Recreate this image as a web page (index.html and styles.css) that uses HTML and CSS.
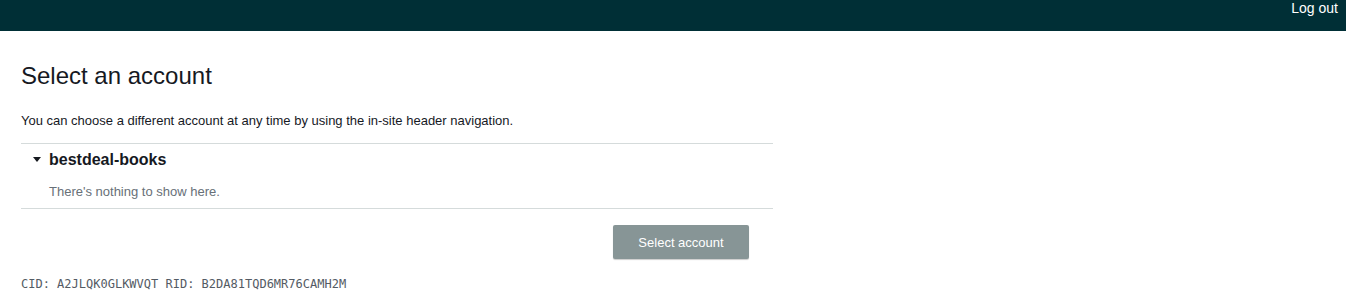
FILE: index.html
```html
<!DOCTYPE html>
<html lang="en">
<head>
    <meta charset="UTF-8">
    <meta name="viewport" content="width=device-width, initial-scale=1.0">
    <title>Select an account</title>
    <link rel="stylesheet" href="styles.css">
</head>

<body>
    <div class="topBar">
        <a href="#" class="logOut">Log out</a>
    </div>

    <div class="content">
        <h1 class="title">Select an account</h1>
        <p class="intro">You can choose a different account at any time by using the in-site header navigation.</p>

        <div class="accountList">
            <div class="group">
                <div class="groupHead">
                    <svg class="caret" width="8" height="5" viewBox="0 0 8 5"><path d="M0 0 L8 0 L4 5 Z" fill="#16191f"/></svg>
                    <span class="groupName">bestdeal-books</span>
                </div>
                <div class="empty">There's nothing to show here.</div>
            </div>
        </div>

        <div class="actions">
            <button type="button" class="selectButton" disabled>Select account</button>
        </div>

        <div class="ids">CID: A2JLQK0GLKWVQT RID: B2DA81TQD6MR76CAMH2M</div>
    </div>
</body>

</html>
```

FILE: styles.css
```css
* {
    margin: 0;
    padding: 0;
    box-sizing: border-box;
}
body {
    font-family: "Liberation Sans", Arial, sans-serif;
    color: #16191f;
    background-color: white;
}
.topBar {
    height: 31px;
    background-color: #002f36;
    display: flex;
    justify-content: flex-end;
    padding-right: 8px;
}
.logOut {
    color: white;
    text-decoration: none;
    font-size: 14px;
    line-height: 16px;
}
.content {
    width: 773px;
    padding-left: 21px;
}
.title {
    font-size: 24px;
    font-weight: normal;
    line-height: 28px;
    margin-top: 31px;
    color: #16191f;
}
.intro {
    font-size: 13px;
    line-height: 16px;
    margin-top: 23px;
    margin-bottom: 14px;
}
.accountList {
    border-top: 1px solid #d5dbdb;
    border-bottom: 1px solid #d5dbdb;
}
.groupHead {
    display: flex;
    align-items: center;
    height: 31px;
    padding-left: 12px;
}
.caret {
    margin-right: 8px;
}
.groupName {
    font-size: 16px;
    font-weight: bold;
}
.empty {
    font-size: 13px;
    line-height: 16px;
    color: #687078;
    padding-left: 28px;
    padding-top: 9px;
    padding-bottom: 8px;
}
.actions {
    display: flex;
    justify-content: flex-end;
    padding-right: 24px;
    padding-top: 16px;
}
.selectButton {
    width: 136px;
    height: 34px;
    background-color: #879596;
    color: white;
    border: none;
    border-radius: 2px;
    font-family: "Liberation Sans", Arial, sans-serif;
    font-size: 13px;
    box-shadow: 0 1px 1px rgba(0, 0, 0, 0.2);
}
.ids {
    font-family: "DejaVu Sans Mono", monospace;
    font-size: 12px;
    line-height: 14px;
    color: #545b64;
    margin-top: 18px;
}
```
